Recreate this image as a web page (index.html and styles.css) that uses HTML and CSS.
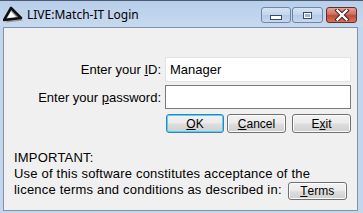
FILE: index.html
```html
<!DOCTYPE html>
<html>
<head>
<meta charset="utf-8">
<link rel="stylesheet" href="styles.css">
</head>
<body>
<div class="window">
  <div class="titlebar">
    <svg class="appicon" width="20" height="18" viewBox="0 0 20 18">
      <polygon points="8,3 2,15 19,13" fill="#9a9a9a" transform="translate(1,1.5)"/>
      <polygon points="8,2 1,14 18,12" fill="none" stroke="#111" stroke-width="2.6" stroke-linejoin="round"/>
      <polygon points="8,5.5 4.5,12 13,11" fill="#fff"/>
    </svg>
    <span class="title">LIVE:Match-IT Login</span>
    <div class="caption-buttons">
      <div class="cbtn cmin"><span class="glyph-min"></span></div>
      <div class="cbtn cmax"><span class="glyph-max"></span></div>
      <div class="cbtn cclose">
        <svg width="16" height="12" viewBox="0 0 16 12">
          <path d="M3.5 1.5 L12.5 10.5 M12.5 1.5 L3.5 10.5" stroke="#3b1a1a" stroke-width="4.2" stroke-linecap="square"/>
          <path d="M3.5 1.5 L12.5 10.5 M12.5 1.5 L3.5 10.5" stroke="#fff" stroke-width="2.4" stroke-linecap="square"/>
        </svg>
      </div>
    </div>
  </div>
  <div class="client">
    <div class="form">
      <label class="lbl">Enter your <u>I</u>D:</label>
      <div class="field field-id">Manager</div>
      <label class="lbl">Enter your <u>p</u>assword:</label>
      <div class="field field-pw"></div>
      <div></div>
      <div class="buttons">
        <div class="btn btn-ok"><u>O</u>K</div>
        <div class="btn btn-cancel"><u>C</u>ancel</div>
        <div class="btn btn-exit">E<u>x</u>it</div>
      </div>
    </div>
    <div class="notice">
      <div class="line">IMPORTANT:</div>
      <div class="line">Use of this software constitutes acceptance of the</div>
      <div class="line last">licence terms and conditions as described in: <div class="btn btn-terms"><u>T</u>erms</div></div>
    </div>
  </div>
</div>
</body>
</html>
```
FILE: styles.css
```css
html, body {
  margin: 0;
  padding: 0;
}
body {
  width: 363px;
  height: 213px;
  overflow: hidden;
  background: #c3d6ec;
  font-family: "Liberation Sans", Arial, sans-serif;
  font-size: 13px;
  color: #000;
}
.window {
  width: 363px;
  height: 213px;
  display: flex;
  flex-direction: column;
  background: #c3d6ec;
  border-top: 1px solid #4a5a70;
  box-sizing: border-box;
}
.titlebar {
  height: 26px;
  display: flex;
  align-items: center;
  padding-left: 3px;
  background: linear-gradient(#b8cee9, #c6d9ef);
  box-sizing: border-box;
}
.appicon {
  display: block;
  margin-top: 1px;
}
.title {
  margin-left: 4px;
  font-family: "Noto Sans", "Open Sans", sans-serif;
  font-size: 12px;
  color: #000;
  margin-top: 1px;
}
.caption-buttons {
  margin-left: auto;
  display: flex;
  align-items: flex-start;
  margin-right: 6px;
  margin-top: 2px;
}
.cbtn {
  height: 16px;
  box-sizing: border-box;
  border: 1px solid #6d86a8;
  border-radius: 3px;
  display: flex;
  align-items: center;
  justify-content: center;
}
.cmin, .cmax {
  width: 30px;
  background: linear-gradient(#d6e3f3, #c2d5ec 50%, #b3c9e6 51%, #c7d9ef);
}
.cmax {
  margin-left: 1px;
  width: 31px;
}
.cclose {
  width: 31px;
  margin-left: 3px;
  border-color: #6b2b24;
  background: linear-gradient(#e3a294, #cf6e5e 45%, #c04a37 55%, #d2735f);
}
.glyph-min {
  width: 10px;
  height: 3px;
  background: #fff;
  border: 1px solid #384b66;
  margin-top: 5px;
}
.glyph-max {
  width: 7px;
  height: 5px;
  border: 1px solid #384b66;
  background: #9fb3cf;
  box-shadow: inset 0 0 0 1px #fff;
}
.client {
  flex: 1;
  margin: 0 5px 2px 3px;
  border: 1px solid #7f93ad;
  background: #f0f0f0;
  position: relative;
}
.form {
  display: grid;
  grid-template-columns: 157px 186px;
  column-gap: 4px;
  row-gap: 3px;
  padding-top: 29px;
  align-items: center;
}
.lbl {
  text-align: right;
  white-space: nowrap;
}
.field {
  box-sizing: border-box;
  background: #fff;
  padding-left: 4px;
  display: flex;
  align-items: center;
  font-size: 13px;
}
.field-id {
  height: 25px;
  border: 1px solid #e4e4e4;
}
.field-pw {
  height: 24px;
  border: 1px solid #7a7a7a;
}
.buttons {
  display: flex;
  margin-top: 2px;
}
.btn {
  box-sizing: border-box;
  height: 19px;
  border: 1px solid #707070;
  border-radius: 3px;
  background: linear-gradient(#f2f2f2, #ebebeb 45%, #dddddd 55%, #cfcfcf);
  box-shadow: inset 0 0 0 1px #fcfcfc;
  display: flex;
  align-items: center;
  justify-content: center;
  font-size: 12px;
  letter-spacing: 0;
}
.btn-ok {
  width: 58px;
  margin-left: 1px;
  border-color: #3c7fb1;
  box-shadow: inset 0 0 0 1px #48d8fb;
}
.btn-cancel {
  width: 59px;
  margin-left: 3px;
}
.btn-exit {
  width: 59px;
  margin-left: 6px;
}
.notice {
  padding-left: 10px;
  margin-top: 17px;
  letter-spacing: 0.2px;
}
.line {
  height: 16px;
  line-height: 16px;
  white-space: nowrap;
}
.line.last {
  display: flex;
  align-items: center;
}
.btn-terms {
  width: 59px;
  height: 18px;
  margin-left: 6px;
  margin-top: 1px;
}
```
